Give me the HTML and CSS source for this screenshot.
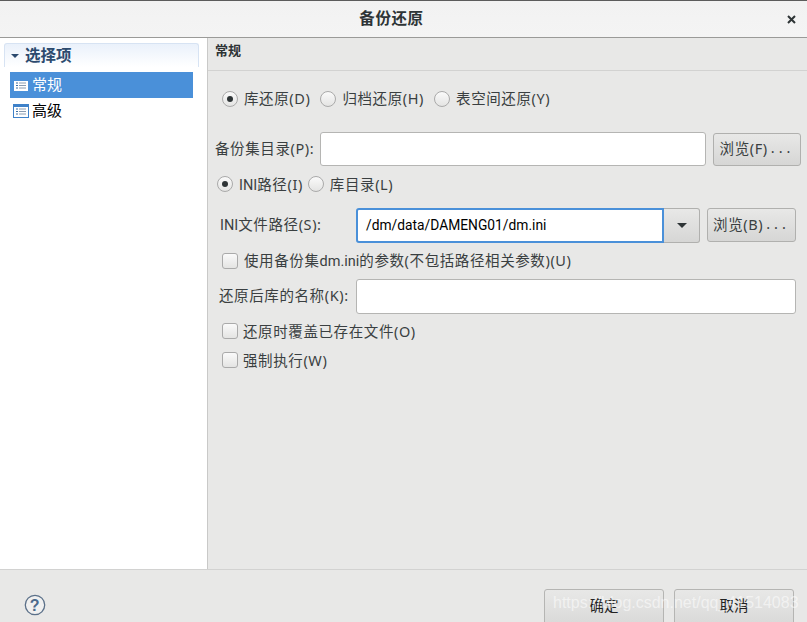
FILE: index.html
```html
<!DOCTYPE html>
<html lang="zh">
<head>
<meta charset="utf-8">
<title>备份还原</title>
<link rel="stylesheet" href="styles.css">
</head>
<body>
<div class="dialog">
  <header class="titlebar">
    <span class="title">备份还原</span>
    <span class="close">
      <svg width="9" height="9" viewBox="0 0 9 9"><path d="M1 1l7 7M8 1l-7 7" stroke="#2e3436" stroke-width="2" fill="none"/></svg>
    </span>
  </header>
  <div class="content">
    <aside class="sidebar">
      <div class="group-head">
        <svg class="caret" width="8" height="4" viewBox="0 0 8 4"><path d="M0 0h8L4 4z" fill="#2c4a6e"/></svg>
        <span>选择项</span>
      </div>
      <ul class="nav">
        <li class="nav-item active">
          <svg width="16" height="14" viewBox="0 0 16 14"><rect x=".5" y=".5" width="15" height="13" fill="#fff" stroke="#4a90d9"/><rect x="1" y="1" width="14" height="2" fill="#4a90d9"/><path d="M3 5h2M3 7.500h2M3 10h2" stroke="#3a6ea5"/><path d="M6 5h7M6 7.500h7M6 10h7" stroke="#8a9cb0"/></svg>
          <span>常规</span>
        </li>
        <li class="nav-item">
          <svg width="16" height="14" viewBox="0 0 16 14"><rect x=".5" y=".5" width="15" height="13" fill="#fff" stroke="#3f82c9"/><rect x="1" y="1" width="14" height="2" fill="#3f82c9"/><path d="M3 5h2M3 7.500h2M3 10h2" stroke="#3a6ea5"/><path d="M6 5h7M6 7.500h7M6 10h7" stroke="#8a9cb0"/></svg>
          <span>高级</span>
        </li>
      </ul>
    </aside>
    <main class="main">
      <div class="section-head">常规</div>
      <div class="form">
        <div class="row row-mode">
          <label class="opt"><span class="radio on"></span><span>库还原(D)</span></label>
          <label class="opt"><span class="radio"></span><span>归档还原(H)</span></label>
          <label class="opt"><span class="radio"></span><span>表空间还原(Y)</span></label>
        </div>
        <div class="row row-backup">
          <span class="label label-backup">备份集目录(P):</span>
          <span class="input input-backup"></span>
          <span class="btn btn-f">浏览(F)<span class="dots">...</span></span>
        </div>
        <div class="row row-path">
          <label class="opt"><span class="radio on"></span><span><span class="latin">INI</span>路径(I)</span></label>
          <label class="opt"><span class="radio"></span><span>库目录(L)</span></label>
        </div>
        <div class="row row-ini">
          <span class="label label-wide"><span class="latin">INI</span>文件路径(S):</span>
          <span class="input focus">/dm/data/DAMENG01/dm.ini</span>
          <span class="combo"><svg width="10" height="5" viewBox="0 0 10 5"><path d="M0 0h10L5 5z" fill="#2e3436"/></svg></span>
          <span class="btn btn-b">浏览(B)<span class="dots">...</span></span>
        </div>
        <div class="row row-check1">
          <label class="opt"><span class="check"></span><span>使用备份集<span class="latin">dm.ini</span>的参数(不包括路径相关参数)(U)</span></label>
        </div>
        <div class="row row-name">
          <span class="label label-wide">还原后库的名称(K):</span>
          <span class="input input-name"></span>
        </div>
        <div class="row row-check2">
          <label class="opt"><span class="check"></span><span>还原时覆盖已存在文件(O)</span></label>
        </div>
        <div class="row row-check3">
          <label class="opt"><span class="check"></span><span>强制执行(W)</span></label>
        </div>
      </div>
    </main>
  </div>
  <footer class="footer">
    <svg class="help" width="22" height="22" viewBox="0 0 22 22"><circle cx="11" cy="11" r="9.700" fill="#f0f0f0" stroke="#5b7089" stroke-width="1.300"/><text x="11" y="16.500" text-anchor="middle" class="help-mark">?</text></svg>
    <div class="actions">
      <span class="btn btn-foot">确定</span>
      <span class="btn btn-foot">取消</span>
    </div>
  </footer>
  <div class="watermark">https://blog.csdn.net/qq_41514083</div>
</div>
</body>
</html>
```

FILE: styles.css
```css
* { box-sizing: border-box; }
html, body { margin: 0; height: 100%; overflow: hidden; }
body {
  font-family: "Noto Sans", "Noto Sans CJK SC", sans-serif;
  font-size: 14.500px;
  letter-spacing: .6px;
  color: #3a3f41;
  background: #e8e8e7;
}
.dialog {
  position: relative;
  width: 807px;
  height: 622px;
  display: flex;
  flex-direction: column;
  overflow: hidden;
}
.titlebar {
  height: 38px;
  flex: none;
  position: relative;
  display: flex;
  align-items: center;
  justify-content: center;
  padding: 0 24px 4px 0;
  background: linear-gradient(#f2f2f2, #f4f4f4);
  border-top: 1px solid #5c5c5c;
  border-bottom: 1px solid #9a9a98;
}
.title { font-size: 15.500px; font-weight: 700; font-family: "Noto Sans CJK SC", sans-serif; color: #2e3436; }
.close { position: absolute; right: 11px; top: 14px; display: flex; }
.content { height: 531px; flex: none; display: flex; }
.sidebar {
  width: 208px;
  flex: none;
  background: #fff;
  border-right: 1px solid #c9c9c8;
  padding: 5px 4px 0;
}
.group-head {
  height: 24px;
  margin: 0 4px 5px 0;
  display: flex;
  align-items: center;
  gap: 6px;
  padding: 0 0 4px 6px;
  border: 1px solid #d7e3f3;
  border-bottom: 0;
  border-radius: 3px 3px 0 0;
  background: linear-gradient(#eaf1fb, #fff);
  font-family: "Noto Sans CJK SC", sans-serif;
  font-weight: 700;
  font-size: 15.500px;
  letter-spacing: 0;
  color: #2c4a6e;
}
.caret { margin-top: 4px; }
.nav { list-style: none; margin: 0; padding: 0 0 0 6px; width: 189px; }
.nav-item {
  height: 26px;
  display: flex;
  align-items: center;
  gap: 3px;
  padding: 0 0 4px 3px;
  font-family: "Noto Sans CJK SC", sans-serif;
  font-size: 15px;
  letter-spacing: 0;
  color: #000;
}
.nav-item svg { margin-top: 4px; }
.active { background: #4a90d9; color: #fff; }
.main { flex: 1; min-width: 0; }
.section-head {
  height: 33px;
  padding: 3px 0 0 7px;
  border-bottom: 1px solid #d2d2d1;
  font-family: "Noto Sans CJK SC", sans-serif;
  font-weight: 700;
  font-size: 13px;
  letter-spacing: 0;
  line-height: 17px;
  color: #2e3436;
}
.form { display: flex; flex-direction: column; }
.row { display: flex; align-items: center; }
.opt { display: inline-flex; align-items: center; white-space: nowrap; padding-bottom: 2px; }
.label { padding-bottom: 4px; }
.radio, .check {
  flex: none;
  width: 16px;
  height: 16px;
  margin-top: 2px;
  background: linear-gradient(#fafafa, #e4e4e3);
  border: 1px solid #aaa;
  display: inline-flex;
  align-items: center;
  justify-content: center;
}
.radio { border-radius: 50%; margin-right: 6px; }
.on::after { content: ""; width: 6px; height: 6px; border-radius: 50%; background: #2e3436; }
.check { border-radius: 3px; margin-right: 6px; }
.latin { font-family: "Roboto", sans-serif; letter-spacing: 0; }
.input {
  height: 34px;
  background: #fff;
  border: 1px solid #b5b5b3;
  border-radius: 3px;
  display: flex;
  align-items: center;
  color: #000;
}
.btn {
  display: inline-flex;
  align-items: center;
  justify-content: center;
  height: 33px;
  padding-bottom: 4px;
  background: linear-gradient(#e8e8e7, #d6d6d5);
  border: 1px solid #b0b0ae;
  border-radius: 3px;
  white-space: nowrap;
}
.dots { letter-spacing: 4px; margin-left: 3px; }
.row-mode { margin-top: 19px; padding-left: 14px; height: 18px; gap: 10px; }
.row-mode .opt, .row-check1 .opt { padding-bottom: 4px; }
.row-mode .radio, .row-check1 .check { margin-top: 4px; }
.row-backup { margin-top: 24px; padding-left: 7px; }
.label-backup { width: 105px; white-space: nowrap; }
.input-backup { width: 386px; }
.btn-f { width: 88px; margin-left: 7px; }
.row-path { margin-top: 8px; height: 20px; padding-left: 9px; gap: 5px; }
.row-ini { margin-top: 14px; padding-left: 12px; align-items: flex-start; }
.label-wide { width: 136px; white-space: nowrap; align-self: center; flex: none; }
.focus {
  width: 308px;
  height: 35px;
  padding: 0 0 2px 8px;
  border: 2px solid #4a90d9;
  border-radius: 3px 0 0 3px;
  font-family: "Roboto", "Noto Sans CJK SC", sans-serif;
  font-size: 13.800px;
  letter-spacing: 0;
}
.combo {
  width: 36px;
  height: 35px;
  display: flex;
  align-items: center;
  justify-content: center;
  background: linear-gradient(#e8e8e7, #d6d6d5);
  border: 1px solid #b0b0ae;
  border-left: 0;
  border-radius: 0 3px 3px 0;
}
.btn-b { width: 89px; margin-left: 7px; height: 34px; }
.row-check1 { margin-top: 9px; height: 18px; padding-left: 14px; }
.row-name { margin-top: 9px; padding-left: 11px; }
.row-name .label-wide { width: 137px; }
.input-name { width: 440px; height: 35px; }
.row-check2 { margin-top: 8px; height: 18px; padding-left: 14px; }
.row-check3 { margin-top: 11px; height: 18px; padding-left: 14px; }
.row-check2 .check, .row-check3 .check { margin-right: 5px; }
.footer {
  flex: 1;
  min-height: 0;
  border-top: 1px solid #d2d2d1;
  position: relative;
  display: flex;
  justify-content: space-between;
  padding: 19px 13px 0 24px;
}
.help { margin-top: 5px; }
.help-mark { font-family: "Liberation Sans", sans-serif; font-size: 16px; font-weight: 700; fill: #4c6a8c; }
.actions { display: flex; gap: 10px; }
.btn-foot { width: 120px; height: 44px; border-color: #b5b5b3; color: #222; padding-bottom: 13px; letter-spacing: 0; }
.watermark {
  position: absolute;
  left: 553px;
  top: 594px;
  font-family: "Liberation Sans", sans-serif;
  font-size: 16px;
  letter-spacing: 0;
  color: rgba(255, 255, 255, .55);
  white-space: nowrap;
  pointer-events: none;
}
```
